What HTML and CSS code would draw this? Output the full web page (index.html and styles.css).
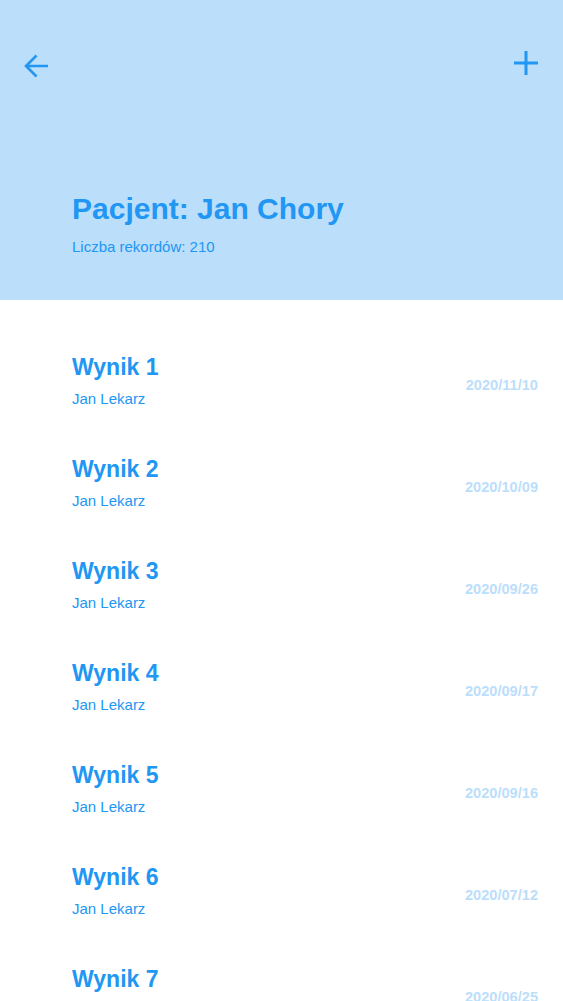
FILE: index.html
```html
<!DOCTYPE html>
<html lang="pl">
<head>
<meta charset="utf-8">
<title>Pacjent: Jan Chory</title>
<link rel="stylesheet" href="styles.css">
</head>
<body>
<header class="header">
  <nav class="nav">
    <svg class="icon icon-back" width="24" height="24" viewBox="0 0 24 24" aria-label="Wstecz">
      <path d="M24 12H2M12.5 1.5L2 12l10.5 10.5" fill="none" stroke="#2196F3" stroke-width="2.6" stroke-linejoin="miter" stroke-linecap="butt"/>
    </svg>
    <svg class="icon icon-add" width="24" height="24" viewBox="0 0 24 24" aria-label="Dodaj">
      <path d="M12 0v24M0 12h24" fill="none" stroke="#2196F3" stroke-width="3"/>
    </svg>
  </nav>
  <div class="header-content">
    <h1 class="title">Pacjent: Jan Chory</h1>
    <p class="subtitle">Liczba rekordów: 210</p>
  </div>
</header>
<main class="list">
  <div class="item"><div class="item-text"><div class="item-title">Wynik 1</div><div class="item-sub">Jan Lekarz</div></div><div class="item-date">2020/11/10</div></div>
  <div class="item"><div class="item-text"><div class="item-title">Wynik 2</div><div class="item-sub">Jan Lekarz</div></div><div class="item-date">2020/10/09</div></div>
  <div class="item"><div class="item-text"><div class="item-title">Wynik 3</div><div class="item-sub">Jan Lekarz</div></div><div class="item-date">2020/09/26</div></div>
  <div class="item"><div class="item-text"><div class="item-title">Wynik 4</div><div class="item-sub">Jan Lekarz</div></div><div class="item-date">2020/09/17</div></div>
  <div class="item"><div class="item-text"><div class="item-title">Wynik 5</div><div class="item-sub">Jan Lekarz</div></div><div class="item-date">2020/09/16</div></div>
  <div class="item"><div class="item-text"><div class="item-title">Wynik 6</div><div class="item-sub">Jan Lekarz</div></div><div class="item-date">2020/07/12</div></div>
  <div class="item"><div class="item-text"><div class="item-title">Wynik 7</div><div class="item-sub">Jan Lekarz</div></div><div class="item-date">2020/06/25</div></div>
</main>
</body>
</html>
```
FILE: styles.css
```css
html, body {
  margin: 0;
  padding: 0;
  background: #ffffff;
}

body {
  font-family: "Liberation Sans", Arial, sans-serif;
  color: #2196F3;
  overflow: hidden;
}

.header {
  background: #BBDEFB;
  height: 300px;
  box-sizing: border-box;
  display: flex;
  flex-direction: column;
}

.nav {
  display: flex;
  justify-content: space-between;
  align-items: flex-start;
  padding: 51px 25px 0 24px;
  height: 27px;
}

.icon {
  display: block;
}

.icon-back {
  margin-top: 3px;
}

.header-content {
  margin-top: 114px;
  padding-left: 72px;
}

.title {
  margin: 0;
  font-size: 30px;
  line-height: 34px;
  font-weight: bold;
}

.subtitle {
  margin: 12px 0 0;
  font-size: 15px;
  line-height: 18px;
}

.list {
  padding-top: 30px;
}

.item {
  display: flex;
  align-items: center;
  justify-content: space-between;
  padding: 24px 25px 24px 72px;
}

.item-title {
  font-size: 23px;
  line-height: 26px;
  font-weight: bold;
}

.item-sub {
  margin-top: 10px;
  font-size: 15px;
  line-height: 18px;
}

.item-date {
  margin-top: 7px;
  font-size: 14.6px;
  line-height: 16px;
  font-weight: bold;
  color: #BBDEFB;
}
```
